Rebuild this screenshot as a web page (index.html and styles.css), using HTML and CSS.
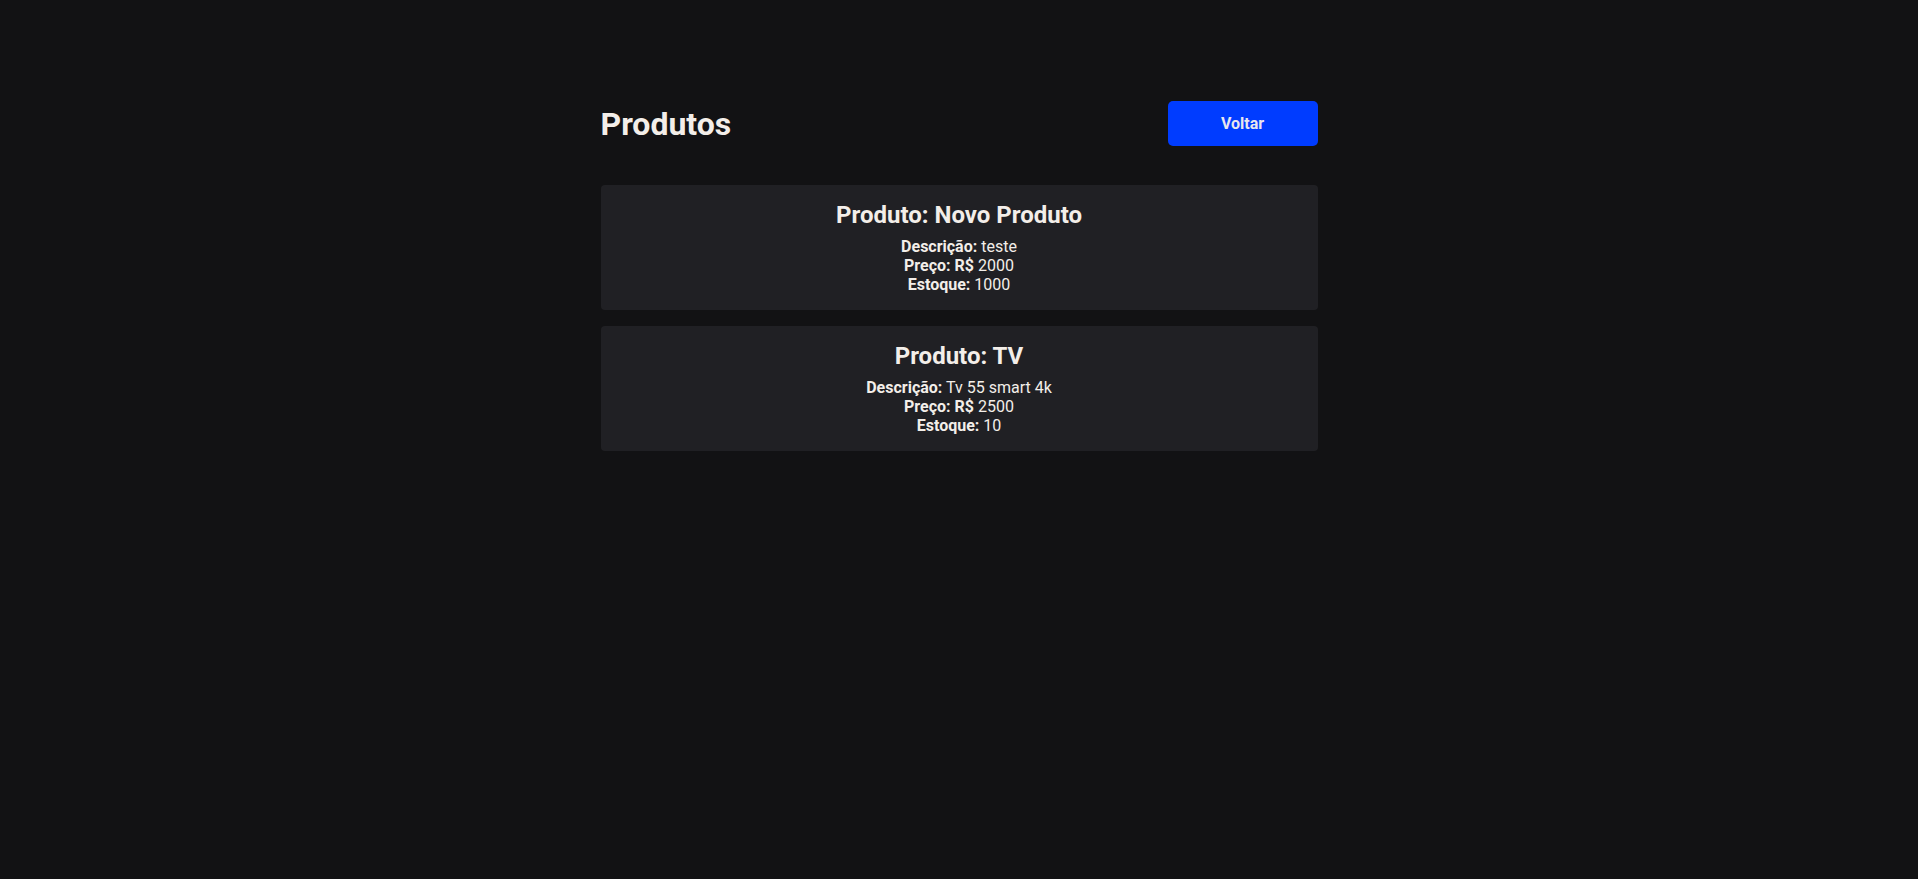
FILE: index.html
```html
<!DOCTYPE html>
<html lang="pt-BR">
<head>
<meta charset="utf-8">
<title>Produtos</title>
<link rel="stylesheet" href="styles.css">
</head>
<body>
<main class="container">
  <header class="page-header">
    <h1 class="page-title">Produtos</h1>
    <button class="btn-back" type="button">Voltar</button>
  </header>
  <section class="product-list">
    <article class="product-card">
      <h2 class="product-name">Produto: Novo Produto</h2>
      <p class="product-line"><strong>Descrição:</strong> teste</p>
      <p class="product-line"><strong>Preço: R$</strong> 2000</p>
      <p class="product-line"><strong>Estoque:</strong> 1000</p>
    </article>
    <article class="product-card">
      <h2 class="product-name">Produto: TV</h2>
      <p class="product-line"><strong>Descrição:</strong> Tv 55 smart 4k</p>
      <p class="product-line"><strong>Preço: R$</strong> 2500</p>
      <p class="product-line"><strong>Estoque:</strong> 10</p>
    </article>
  </section>
</main>
</body>
</html>
```

FILE: styles.css
```css
* {
  box-sizing: border-box;
}

html, body {
  margin: 0;
  padding: 0;
  background: #121214;
  min-height: 100%;
}

body {
  font-family: Roboto, "Liberation Sans", sans-serif;
  color: #f3eee9;
  -webkit-font-smoothing: antialiased;
}

.container {
  width: 717px;
  margin: 0 auto;
  padding-top: 101px;
}

.page-header {
  display: flex;
  align-items: center;
  justify-content: space-between;
  height: 45px;
  margin-bottom: 39px;
}

.page-title {
  margin: 0;
  font-size: 32px;
  font-weight: 700;
  line-height: 1;
}

.btn-back {
  width: 150px;
  height: 45px;
  border: 0;
  border-radius: 5px;
  background: #003cff;
  color: #e8e6ee;
  font-family: Roboto, "Liberation Sans", sans-serif;
  font-size: 16px;
  font-weight: 700;
  cursor: pointer;
}

.product-list {
  display: flex;
  flex-direction: column;
  gap: 16px;
}

.product-card {
  background: #202024;
  border-radius: 4px;
  padding: 16px 16px 14px;
  text-align: center;
  height: 125px;
}

.product-name {
  margin: 0 0 10px;
  font-size: 24px;
  font-weight: 700;
  line-height: 28px;
}

.product-line {
  margin: 0 0 3px;
  font-size: 16px;
  line-height: 16px;
  height: 16px;
}

.product-line strong {
  font-weight: 700;
}
```
